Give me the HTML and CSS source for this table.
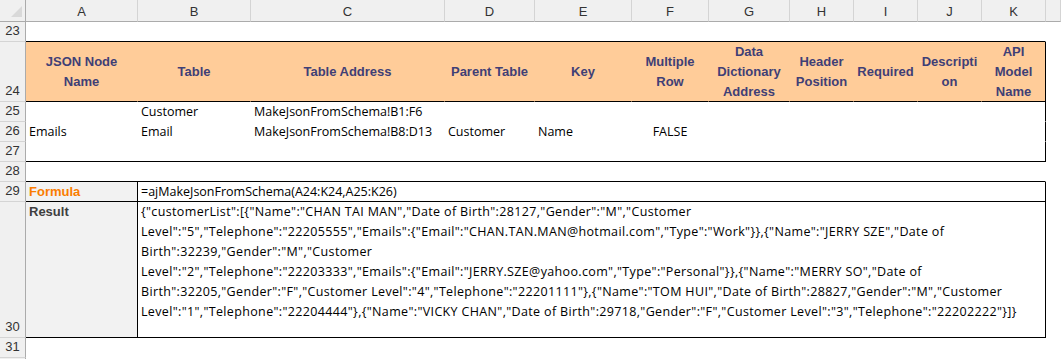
FILE: index.html
```html
<!DOCTYPE html>
<html lang="en">
<head>
    <meta charset="UTF-8">
    <title>MakeJsonFromSchema</title>
    <link rel="stylesheet" href="styles.css">
</head>
<body>
    <div class="sheet">
        <!-- Column headers -->
        <div class="corner">
            <svg width="12" height="12" viewBox="0 0 12 12"><polygon points="0,11 11,11 11,0" fill="#d9d9d9"/></svg>
        </div>
        <div class="col-head">A</div>
        <div class="col-head">B</div>
        <div class="col-head">C</div>
        <div class="col-head">D</div>
        <div class="col-head">E</div>
        <div class="col-head">F</div>
        <div class="col-head">G</div>
        <div class="col-head">H</div>
        <div class="col-head">I</div>
        <div class="col-head">J</div>
        <div class="col-head">K</div>
        <div class="col-head"></div>

        <!-- Row 23 -->
        <div class="row-head">23</div>
        <div class="cell span-11 edge-b"></div>
        <div class="cell"></div>

        <!-- Row 24: schema header -->
        <div class="row-head">24</div>
        <div class="cell hdr">JSON Node<br>Name</div>
        <div class="cell hdr">Table</div>
        <div class="cell hdr">Table Address</div>
        <div class="cell hdr">Parent Table</div>
        <div class="cell hdr">Key</div>
        <div class="cell hdr">Multiple<br>Row</div>
        <div class="cell hdr">Data<br>Dictionary<br>Address</div>
        <div class="cell hdr">Header<br>Position</div>
        <div class="cell hdr">Required</div>
        <div class="cell hdr">Descripti<br>on</div>
        <div class="cell hdr edge-r">API<br>Model<br>Name</div>
        <div class="cell"></div>

        <!-- Row 25 -->
        <div class="row-head">25</div>
        <div class="cell"></div>
        <div class="cell">Customer</div>
        <div class="cell">MakeJsonFromSchema!B1:F6</div>
        <div class="cell span-8 edge-r"></div>
        <div class="cell"></div>

        <!-- Row 26 -->
        <div class="row-head">26</div>
        <div class="cell">Emails</div>
        <div class="cell">Email</div>
        <div class="cell">MakeJsonFromSchema!B8:D13</div>
        <div class="cell">Customer</div>
        <div class="cell">Name</div>
        <div class="cell center">FALSE</div>
        <div class="cell span-5 edge-r"></div>
        <div class="cell"></div>

        <!-- Row 27 -->
        <div class="row-head">27</div>
        <div class="cell span-11 edge-b edge-r"></div>
        <div class="cell"></div>

        <!-- Row 28 -->
        <div class="row-head">28</div>
        <div class="cell span-11 edge-b"></div>
        <div class="cell"></div>

        <!-- Row 29: formula -->
        <div class="row-head">29</div>
        <div class="cell label formula edge-b edge-r">Formula</div>
        <div class="cell span-10 edge-b edge-r">=ajMakeJsonFromSchema(A24:K24,A25:K26)</div>
        <div class="cell"></div>

        <!-- Row 30: result -->
        <div class="row-head">30</div>
        <div class="cell label result edge-b edge-r">Result</div>
        <div class="cell span-10 edge-b edge-r wrap">{"customerList":[{"Name":"CHAN TAI MAN","Date of Birth":28127,"Gender":"M","Customer<br>Level":"5","Telephone":"22205555","Emails":{"Email":"CHAN.TAN.MAN@hotmail.com","Type":"Work"}},{"Name":"JERRY SZE","Date of<br>Birth":32239,"Gender":"M","Customer<br>Level":"2","Telephone":"22203333","Emails":{"Email":"JERRY.SZE@yahoo.com","Type":"Personal"}},{"Name":"MERRY SO","Date of<br>Birth":32205,"Gender":"F","Customer Level":"4","Telephone":"22201111"},{"Name":"TOM HUI","Date of Birth":28827,"Gender":"M","Customer<br>Level":"1","Telephone":"22204444"},{"Name":"VICKY CHAN","Date of Birth":29718,"Gender":"F","Customer Level":"3","Telephone":"22202222"}]}</div>
        <div class="cell"></div>

        <!-- Row 31 -->
        <div class="row-head">31</div>
        <div class="cell span-12"></div>

        <div class="row-head"></div>
        <div class="cell span-12"></div>
    </div>
</body>
</html>
```

FILE: styles.css
```css
:root {
    --head-bg: #f0f0f0;
    --head-line: #d4d4d4;
    --head-edge: #ababab;
    --input-fill: #ffcc99;
    --input-text: #3f3f76;
    --output-fill: #f2f2f2;
    --output-text: #3f3f3f;
    --calc-text: #fa7d00;
}

* {
    margin: 0;
    padding: 0;
    box-sizing: border-box;
}

body {
    background: #fff;
    font-family: 'Liberation Sans', Arial, sans-serif;
    font-size: 13px;
    color: #000;
    overflow: hidden;
}

.sheet {
    display: grid;
    grid-template-columns: 26px 112px 113px 194px 90px 97px 77px 81px 64px 64px 64px 64px 1fr;
    grid-template-rows: 22px 20px 60px 20px 20px 20px 20px 20px 136px 20px 1fr;
    width: 1061px;
    height: 359px;
}

/* Headers */
.corner {
    background: var(--head-bg);
    border-right: 1px solid var(--head-edge);
    border-bottom: 1px solid var(--head-edge);
    display: flex;
    align-items: flex-end;
    justify-content: flex-end;
    padding: 0 2px 3px 0;
}

.col-head {
    background: var(--head-bg);
    border-right: 1px solid var(--head-line);
    border-bottom: 1px solid var(--head-edge);
    color: #333;
    display: flex;
    align-items: center;
    justify-content: center;
    padding-top: 1px;
}

.row-head {
    background: var(--head-bg);
    border-right: 1px solid var(--head-edge);
    border-bottom: 1px solid var(--head-line);
    color: #333;
    display: flex;
    align-items: flex-end;
    justify-content: center;
    padding-bottom: 1px;
    line-height: 18px;
}

/* Cells */
.cell {
    border-right: 1px solid transparent;
    border-bottom: 1px solid transparent;
    padding: 0 3px;
    font-family: 'Open Sans', 'Liberation Sans', sans-serif;
    font-size: 12.5px;
    line-height: 19px;
    white-space: nowrap;
}

.center {
    text-align: center;
}

.span-5 { grid-column: span 5; }
.span-8 { grid-column: span 8; }
.span-10 { grid-column: span 10; }
.span-11 { grid-column: span 11; }
.span-12 { grid-column: span 12; }

.edge-b {
    border-bottom-color: #000;
}

.edge-r {
    border-right-color: #000;
}

.hdr {
    background: var(--input-fill);
    border-bottom-color: #000;
    color: var(--input-text);
    font-family: 'Liberation Sans', Arial, sans-serif;
    font-size: 13px;
    font-weight: 700;
    text-align: center;
    line-height: 20px;
    display: flex;
    align-items: center;
    justify-content: center;
    padding: 0;
}

.label {
    background: var(--output-fill);
    font-family: 'Liberation Sans', Arial, sans-serif;
    font-size: 13px;
    font-weight: 700;
    line-height: 20px;
}

.formula {
    color: var(--calc-text);
}

.result {
    color: var(--output-text);
}

.wrap {
    line-height: 20px;
    letter-spacing: 0.35px;
}
```
